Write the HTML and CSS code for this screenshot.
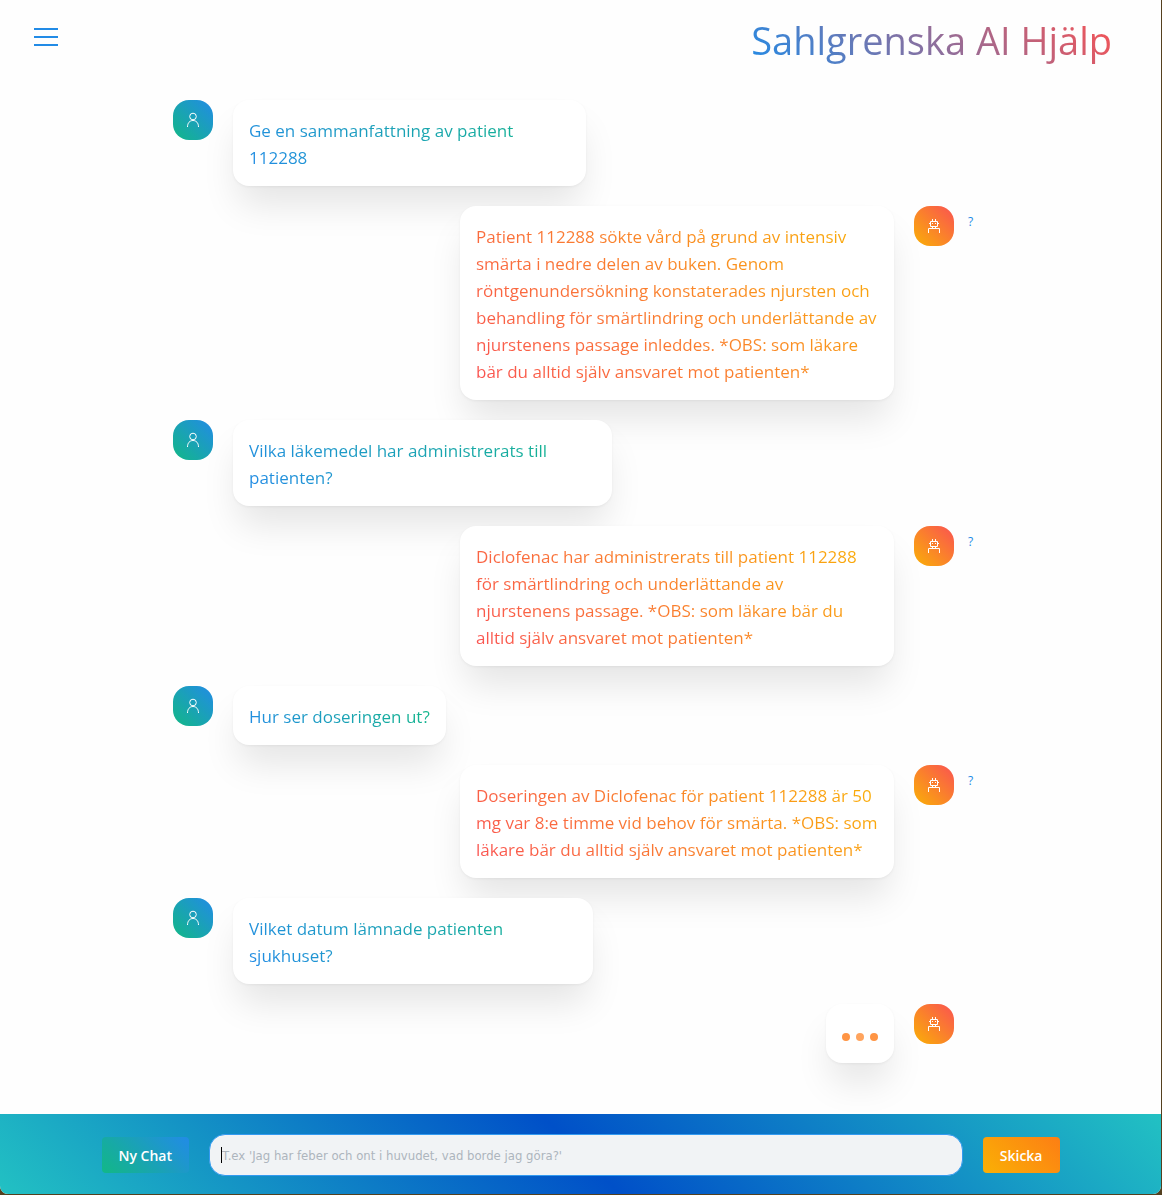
FILE: index.html
```html
<!DOCTYPE html>
<html lang="sv">
<head>
<meta charset="utf-8">
<meta name="viewport" content="width=device-width, initial-scale=1">
<title>Sahlgrenska AI Hjälp</title>
<link rel="stylesheet" href="styles.css">
</head>
<body>
<svg class="sprite" aria-hidden="true">
  <symbol id="icon-user" viewBox="0 0 16 16">
    <circle cx="8" cy="4.5" r="3.3"/>
    <path d="M2.500 15c0-4 2.200-6.500 5.500-6.500s5.500 2.500 5.500 6.500"/>
  </symbol>
  <symbol id="icon-robot" viewBox="0 0 16 16">
    <path d="M6.500 1v2.500M9.500 1v2.500M4.500 3.500h7v5h-7zM3 5.500h1.500M11.500 5.500H13M6.500 8.500v2M9.500 8.500v2M2.500 15v-4.500h11V15M6 5.500h1M9 5.500h1"/>
  </symbol>
</svg>
<div class="app">
  <header class="header">
    <button class="burger" type="button" aria-label="Meny"><span class="burger-lines"></span></button>
    <h1 class="title">Sahlgrenska AI Hjälp</h1>
  </header>

  <main class="chat">
    <div class="row">
      <span class="avatar avatar-user"><svg class="icon"><use href="#icon-user"/></svg></span>
      <div class="bubble bubble-small"><p class="text text-user">Ge en sammanfattning av patient<br>112288</p></div>
    </div>
    <div class="row row-bot">
      <div class="bubble bubble-wide"><p class="text text-bot">Patient 112288 sökte vård på grund av intensiv<br>smärta i nedre delen av buken. Genom<br>röntgenundersökning konstaterades njursten och<br>behandling för smärtlindring och underlättande av<br>njurstenens passage inleddes. *OBS: som läkare<br>bär du alltid själv ansvaret mot patienten*</p></div>
      <span class="avatar avatar-bot"><svg class="icon"><use href="#icon-robot"/></svg></span>
      <a class="help" href="#">?</a>
    </div>
    <div class="row">
      <span class="avatar avatar-user"><svg class="icon"><use href="#icon-user"/></svg></span>
      <div class="bubble bubble-large"><p class="text text-user">Vilka läkemedel har administrerats till<br>patienten?</p></div>
    </div>
    <div class="row row-bot">
      <div class="bubble bubble-wide"><p class="text text-bot">Diclofenac har administrerats till patient 112288<br>för smärtlindring och underlättande av<br>njurstenens passage. *OBS: som läkare bär du<br>alltid själv ansvaret mot patienten*</p></div>
      <span class="avatar avatar-bot"><svg class="icon"><use href="#icon-robot"/></svg></span>
      <a class="help" href="#">?</a>
    </div>
    <div class="row">
      <span class="avatar avatar-user"><svg class="icon"><use href="#icon-user"/></svg></span>
      <div class="bubble"><p class="text text-user">Hur ser doseringen ut?</p></div>
    </div>
    <div class="row row-bot">
      <div class="bubble bubble-wide"><p class="text text-bot">Doseringen av Diclofenac för patient 112288 är 50<br>mg var 8:e timme vid behov för smärta. *OBS: som<br>läkare bär du alltid själv ansvaret mot patienten*</p></div>
      <span class="avatar avatar-bot"><svg class="icon"><use href="#icon-robot"/></svg></span>
      <a class="help" href="#">?</a>
    </div>
    <div class="row">
      <span class="avatar avatar-user"><svg class="icon"><use href="#icon-user"/></svg></span>
      <div class="bubble bubble-medium"><p class="text text-user">Vilket datum lämnade patienten<br>sjukhuset?</p></div>
    </div>
    <div class="row row-bot">
      <div class="bubble typing"><span class="dot"></span><span class="dot dot-faded"></span><span class="dot"></span></div>
      <span class="avatar avatar-bot"><svg class="icon"><use href="#icon-robot"/></svg></span>
      <span class="help"></span>
    </div>
  </main>

  <footer class="footer">
    <form class="composer">
      <button class="button button-new" type="button">Ny Chat</button>
      <div class="field">
        <input class="input" type="text" aria-label="Meddelande" placeholder="T.ex 'Jag har feber och ont i huvudet, vad borde jag göra?'">
        <span class="caret"></span>
      </div>
      <button class="button button-send" type="button">Skicka</button>
    </form>
  </footer>
</div>
</body>
</html>
```
FILE: styles.css
```css
* { box-sizing: border-box; }

body {
  margin: 0;
  padding: 0 1px 1px 0;
  background: #54401f;
  font-family: "Segoe UI", "Open Sans", "Noto Sans", sans-serif;
}

.sprite { position: absolute; width: 0; height: 0; }

.app {
  display: flex;
  flex-direction: column;
  min-height: calc(100vh - 1px);
  background: #fefefe;
  border-radius: 0 0 8px 8px;
  overflow: hidden;
}

.header {
  display: flex;
  justify-content: space-between;
  align-items: flex-start;
  height: 100px;
  padding: 14px 49px 0 29px;
}

.burger {
  display: flex;
  align-items: center;
  justify-content: center;
  width: 34px;
  height: 46px;
  padding: 0;
  border: 0;
  background: none;
}

.burger-lines {
  width: 24px;
  height: 18px;
  border: solid #228be6;
  border-width: 2px 0;
  background: linear-gradient(#228be6, #228be6) center / 100% 2px no-repeat;
}

.title {
  margin: 0;
  font-size: 38px;
  font-weight: 400;
  line-height: 52px;
  color: transparent;
  background: linear-gradient(45deg, #228be6, #fa5252);
  background-clip: text;
  -webkit-background-clip: text;
}

.chat {
  flex: 1;
  display: flex;
  flex-direction: column;
  gap: 20px;
  width: 100%;
  max-width: 815px;
  margin: 0 auto;
  padding-bottom: 51px;
}

.row { display: flex; align-items: flex-start; gap: 20px; }
.row-bot { justify-content: flex-end; }

.avatar {
  display: flex;
  flex: none;
  align-items: center;
  justify-content: center;
  width: 40px;
  height: 40px;
  border-radius: 16px;
}
.avatar-user { background: linear-gradient(45deg, #12b886, #228be6); }
.avatar-bot { background: linear-gradient(45deg, #fab005, #fa5252); }

.icon {
  width: 16px;
  height: 16px;
  fill: none;
  stroke: #fff;
  stroke-width: 1;
}

.bubble {
  position: relative;
  padding: 17px 16px 15px;
  border-radius: 16px;
  background: #fff;
  box-shadow: 0 1px 3px rgba(0, 0, 0, .05), 0 24px 36px -5px rgba(0, 0, 0, .1);
}
.bubble-small { width: 353px; }
.bubble-medium { width: 360px; }
.bubble-large { width: 379px; }
.bubble-wide { width: 434px; }

.text {
  margin: 0;
  font-size: 17px;
  line-height: 27px;
  white-space: nowrap;
  color: transparent;
  background-clip: text;
  -webkit-background-clip: text;
}
.text-user { background-image: linear-gradient(45deg, #228be6, #12b886); }
.text-bot { background-image: linear-gradient(45deg, #fa5252, #fab005); }

.help {
  width: 20px;
  margin: 8px 0 0 -6px;
  font-size: 12px;
  line-height: 16px;
  color: #228be6;
  text-decoration: none;
}

.typing {
  display: flex;
  align-items: center;
  gap: 6px;
  height: 59px;
  padding-top: 21px;
}
.dot { width: 8px; height: 8px; border-radius: 50%; background: #ff9544; }
.dot-faded { background: #ffa45e; }

.footer {
  padding: 20px 20px 18px;
  background: linear-gradient(45deg, #22c1c3, #0050c8 50%, #22c1c3);
}

.composer {
  display: flex;
  align-items: center;
  gap: 20px;
  max-width: 958px;
  margin: 0 auto;
}

.field { position: relative; flex: 1; display: flex; }

.input {
  width: 100%;
  height: 42px;
  padding: 0 12px;
  border: 1px solid #339af0;
  border-radius: 16px;
  background: #f1f3f5;
  font: 13px "DejaVu Sans Condensed", "DejaVu Sans", sans-serif;
  outline: 0;
}
.input::placeholder { color: #adb5bd; opacity: 1; }

.caret {
  position: absolute;
  left: 12px;
  top: 13px;
  width: 1px;
  height: 16px;
  background: #000;
}

.button {
  height: 36px;
  padding: 0 17px;
  border: 0;
  border-radius: 4px;
  font: 600 14px "Segoe UI", "Open Sans", sans-serif;
  color: #fff;
}
.button-new { background: linear-gradient(45deg, #12b886, #228be6); }
.button-send { background: linear-gradient(45deg, #fab005, #fd7e14); }
```
